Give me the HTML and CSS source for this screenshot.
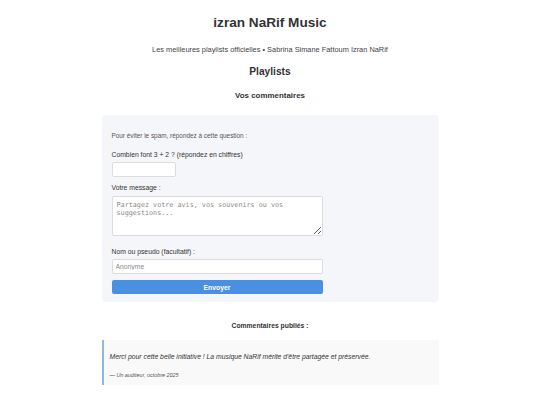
FILE: index.html
```html
<!DOCTYPE html>
<html lang="fr">
<head>
<meta charset="utf-8">
<title>izran NaRif Music</title>
<link rel="stylesheet" href="styles.css">
</head>
<body>
<div class="page">
  <h1 class="title">izran NaRif Music</h1>
  <p class="subtitle">Les meilleures playlists officielles • Sabrina Simane Fattoum Izran NaRif</p>
  <h2 class="section">Playlists</h2>
  <h3 class="subsection">Vos commentaires</h3>
  <form class="form-box">
    <p class="hint">Pour éviter le spam, répondez à cette question :</p>
    <label class="label label-q">Combien font 3 + 2 ? (répondez en chiffres)</label>
    <input class="field field-small" type="text">
    <label class="label label-msg">Votre message :</label>
    <textarea class="area" placeholder="Partagez votre avis, vos souvenirs ou vos suggestions..."></textarea>
    <label class="label label-name">Nom ou pseudo (facultatif) :</label>
    <input class="field field-wide" type="text" placeholder="Anonyme">
    <button class="submit" type="button">Envoyer</button>
  </form>
  <h4 class="published">Commentaires publiés :</h4>
  <div class="comment">
    <p class="comment-text">Merci pour cette belle initiative ! La musique NaRif mérite d'être partagée et préservée.</p>
    <p class="comment-author">— Un auditeur, octobre 2025</p>
  </div>
</div>
</body>
</html>
```
FILE: styles.css
```css
html, body {
  margin: 0;
  padding: 0;
  background: #ffffff;
}
body {
  font-family: "Liberation Sans", Arial, sans-serif;
  color: #333333;
}
.page {
  width: 337px;
  margin: 0 auto;
  padding-top: 15px;
  display: flex;
  flex-direction: column;
}
.title {
  margin: 0;
  font-size: 13.6px;
  line-height: 16px;
  text-align: center;
  font-weight: bold;
  color: #333;
}
.subtitle {
  margin: 14px 0 0;
  font-size: 7.4px;
  line-height: 10px;
  text-align: center;
  color: #444;
}
.section {
  margin: 11px 0 0;
  font-size: 10.2px;
  line-height: 12px;
  text-align: center;
  color: #333;
}
.subsection {
  margin: 13px 0 0;
  font-size: 7.95px;
  line-height: 10px;
  text-align: center;
  color: #333;
}
.form-box {
  margin: 14px 0 0;
  background: #f5f6fa;
  border-radius: 4px;
  padding: 17px 10px 8px;
  display: flex;
  flex-direction: column;
  align-items: flex-start;
}
.hint {
  margin: 0;
  font-size: 6.4px;
  line-height: 8px;
  color: #555;
}
.label {
  display: block;
  font-size: 6.8px;
  line-height: 9px;
  color: #333;
}
.label-q { margin-top: 9.5px; }
.label-msg { margin-top: 5.5px; }
.label-name { margin-top: 10.5px; }
.field {
  box-sizing: border-box;
  height: 15px;
  margin: 3.5px 0 0;
  border: 1px solid #dcdcdc;
  border-radius: 2px;
  background: #fff;
  padding: 0 3px;
  font-family: "Liberation Sans", Arial, sans-serif;
  font-size: 6.8px;
  color: #333;
}
.field::placeholder { color: #8a8a8a; }
.field-small { width: 64px; }
.field-wide { width: 211px; }
.area {
  box-sizing: border-box;
  width: 211px;
  height: 40px;
  margin: 4.5px 0 0;
  border: 1px solid #dcdcdc;
  border-radius: 2px;
  background: #fff;
  padding: 4px 4px;
  font-family: "DejaVu Sans Mono", monospace;
  font-size: 6.75px;
  line-height: 8px;
  resize: vertical;
}
.area::placeholder { color: #8a8a8a; }
.submit {
  box-sizing: border-box;
  width: 211px;
  height: 14px;
  margin: 6px 0 0;
  border: none;
  border-radius: 2px;
  background: #4a90e2;
  color: #fff;
  font-family: "Liberation Sans", Arial, sans-serif;
  font-size: 6.8px;
  font-weight: bold;
  padding: 0;
}
.published {
  margin: 18.5px 0 0;
  font-size: 6.8px;
  line-height: 9px;
  text-align: center;
  font-weight: bold;
  color: #333;
}
.comment {
  margin-top: 10.5px;
  background: #f9f9f9;
  border-left: 2px solid #8fb6e6;
  padding: 11.5px 6px 6.5px;
}
.comment-text {
  margin: 0;
  font-size: 6.8px;
  line-height: 9px;
  font-style: italic;
  color: #333;
}
.comment-author {
  margin: 11px 0 0;
  font-size: 5.4px;
  line-height: 7px;
  font-style: italic;
  color: #555;
}
```
